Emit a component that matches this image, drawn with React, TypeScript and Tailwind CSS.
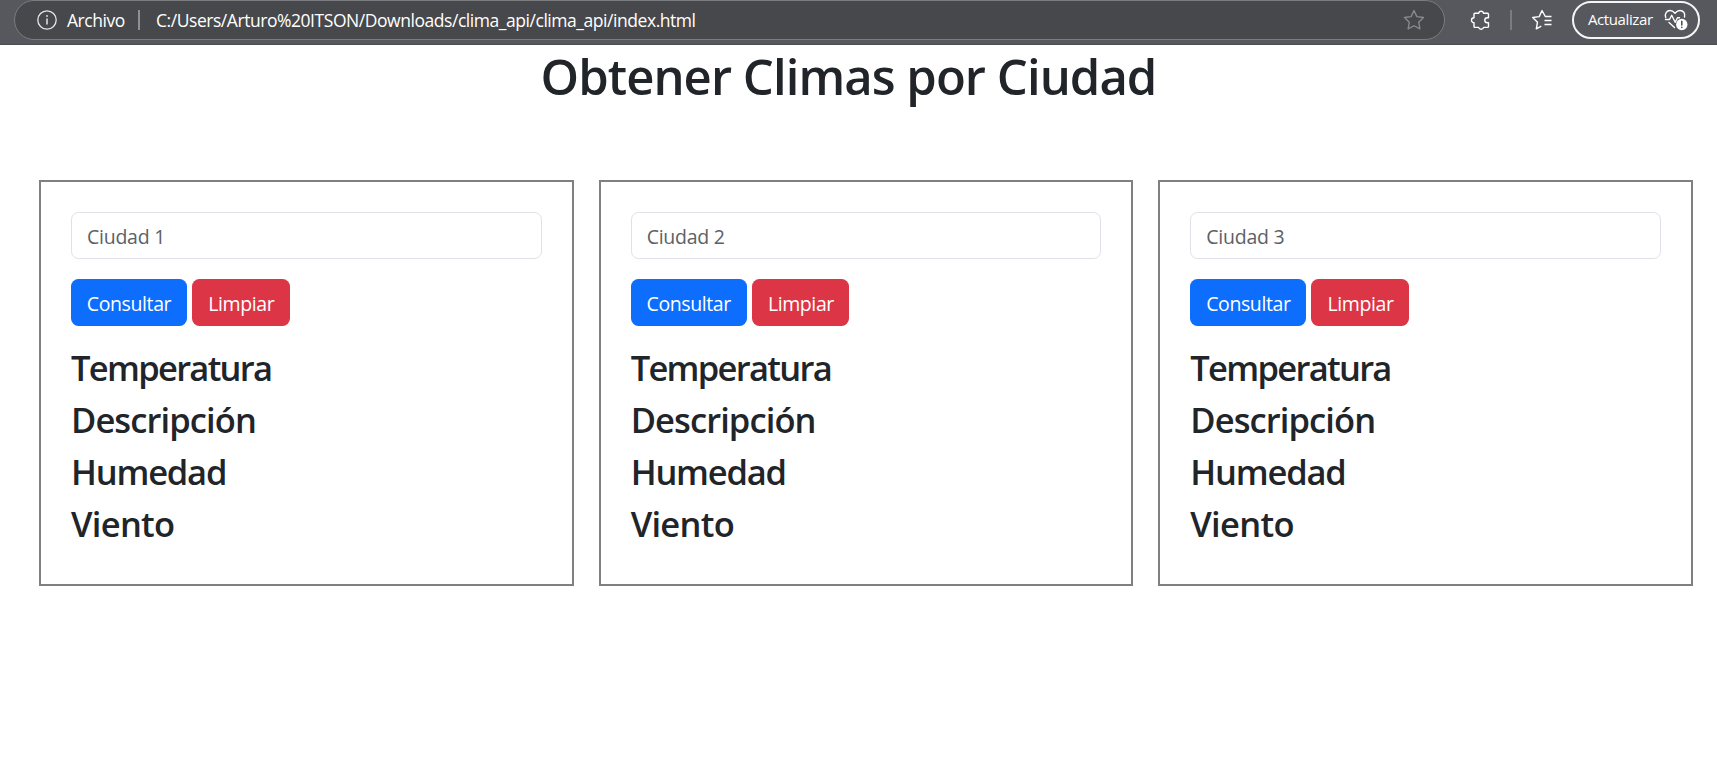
import React from "react";

const FIELDS = [
  { label: "Temperatura", tracking: "tracking-[-1.7px]" },
  { label: "Descripción", tracking: "tracking-[-0.9px]" },
  { label: "Humedad", tracking: "tracking-[-1.2px]" },
  { label: "Viento", tracking: "tracking-[-0.7px]" },
];

function Star() {
  return (
    <svg className="block h-[22px] w-[22px]" viewBox="0 0 22 22" fill="none" stroke="#8a8b8e" strokeWidth="1.3" strokeLinejoin="round">
      <path d="M11 1.500l2.900 6.100 6.600.9-4.800 4.700 1.200 6.700-5.900-3.200-5.900 3.200 1.200-6.700L1.500 8.500l6.600-.9z" />
    </svg>
  );
}

function Toolbar() {
  return (
    <header className="flex h-[45px] shrink-0 items-start border-b border-[#4d4e52] bg-[#57585d] pl-[14px] font-['Open_Sans',sans-serif] text-white">
      <div className="flex h-10 w-[1431px] shrink-0 items-center rounded-full border border-[#7b7c7f] bg-[#47484b] pl-[22px] pr-[19px]">
        <svg className="block h-5 w-5 shrink-0" viewBox="0 0 20 20" fill="none" stroke="#e6e6e6">
          <circle cx="10" cy="10" r="9.200" strokeWidth="1.300" />
          <path d="M10 8.500v6" strokeWidth="1.500" />
          <circle cx="10" cy="6" r=".9" fill="#e6e6e6" stroke="none" />
        </svg>
        <span className="ml-[10px] w-[71px] whitespace-nowrap pt-px text-[17.5px] tracking-[-0.45px]">Archivo</span>
        <span className="h-5 w-[2px] bg-[#8f9093]" />
        <span className="ml-[16px] whitespace-nowrap text-[17.5px] tracking-[-0.45px]">C:/Users/Arturo%20ITSON/Downloads/clima_api/clima_api/index.html</span>
        <span className="ml-auto"><Star /></span>
      </div>
      <div className="flex h-10 items-center">
        <svg className="ml-[25px] h-[22px] w-[20px]" viewBox="0 0 20 22" fill="none" stroke="#fff" strokeWidth="1.400" strokeLinejoin="round">
          <path d="M5 4.200h3.600a2.600 2.600 0 0 1 5 0h3.900q1 0 1 1v3.500h-1.200a2.500 2.500 0 0 0 0 5h1.200v3.700q0 1-1 1h-3.900a2.600 2.600 0 0 1-5 0H5q-1 0-1-1v-3.700a2.500 2.500 0 0 1 0-5V5.200q0-1 1-1z" />
        </svg>
        <span className="ml-[20px] h-5 w-[2px] bg-[#7b7c80]" />
        <svg className="ml-[19px] h-[22px] w-[23px]" viewBox="0 0 23 22" fill="none" stroke="#fff" strokeWidth="1.400" strokeLinejoin="round">
          <path d="M20.500 7.500h-6.200L11 1.500 8.200 7.600 1.700 8.500l4.800 4.700-1.200 6.700 5-2.700M13.500 11.500h7M13.500 15.500h7" />
        </svg>
      </div>
      <button className="ml-[18px] mt-px flex h-[38px] w-[128px] shrink-0 items-center rounded-full border-2 border-[#f5f5f5] pl-[14px]">
        <span className="w-[76px] whitespace-nowrap pb-px text-left text-[15px] tracking-[-0.4px]">Actualizar</span>
        <svg className="h-[24px] w-[24px] shrink-0" viewBox="0 0 24 24" fill="none" stroke="#fff" strokeWidth="1.400" strokeLinecap="round" strokeLinejoin="round">
          <path d="M1.700 9.500C.5 5 3 2.500 6 2.500c2.300 0 3.700 1.200 5 2.700 1.300-1.500 2.700-2.700 5-2.700 3.200 0 5.500 2.600 4.500 6.500M5 14.500l5.500 5M1.500 11.500h4l2.200-4.200 3.500 7 2.300-4.500h2" />
          <circle cx="17.800" cy="16.500" r="5.700" fill="#fff" stroke="none" />
          <path d="M17.800 13.300v3.700M17.800 19.300v.1" stroke="#46474b" strokeWidth="1.500" />
        </svg>
      </button>
    </header>
  );
}

function CityCard({ n }: { n: number }) {
  return (
    <section className="h-[406px] border-2 border-[#808080] px-[30px] pt-[30px]">
      <input
        placeholder={`Ciudad ${n}`}
        className="block h-[47px] w-full rounded-[7.5px] border border-[#dee2e6] px-[15px] pt-[2px] text-[19.5px] tracking-[-0.25px] text-[#212529] outline-none placeholder:text-[#5c6166]"
      />
      <div className="mt-5 flex gap-[5px] text-[19.5px] tracking-[-0.4px] text-white">
        <button className="h-[47px] w-[116px] whitespace-nowrap rounded-[7.5px] bg-[#0d6efd] pt-[2px]">Consultar</button>
        <button className="h-[47px] w-[97.500px] whitespace-nowrap rounded-[7.5px] bg-[#dc3545] pl-px pt-[2px]">Limpiar</button>
      </div>
      <div className="mt-[21px] flex flex-col gap-[10px]">
        {FIELDS.map(({ label, tracking }) => (
          <h2 key={label} className={`text-[34.5px] font-[550] leading-[42px] ${tracking}`}>{label}</h2>
        ))}
      </div>
    </section>
  );
}

export default function App() {
  return (
    <div className="flex h-[757px] flex-col overflow-hidden bg-white font-['Open_Sans',sans-serif] text-[#212529]">
      <Toolbar />
      <h1 className="h-[135px] whitespace-nowrap pr-[20px] pt-px text-center text-[49px] font-[550] leading-[60px] tracking-[-0.95px]">
        Obtener Climas por Ciudad
      </h1>
      <main className="grid grid-cols-3 gap-[25px] pl-[39px] pr-[24px]">
        <CityCard n={1} />
        <CityCard n={2} />
        <CityCard n={3} />
      </main>
    </div>
  );
}
